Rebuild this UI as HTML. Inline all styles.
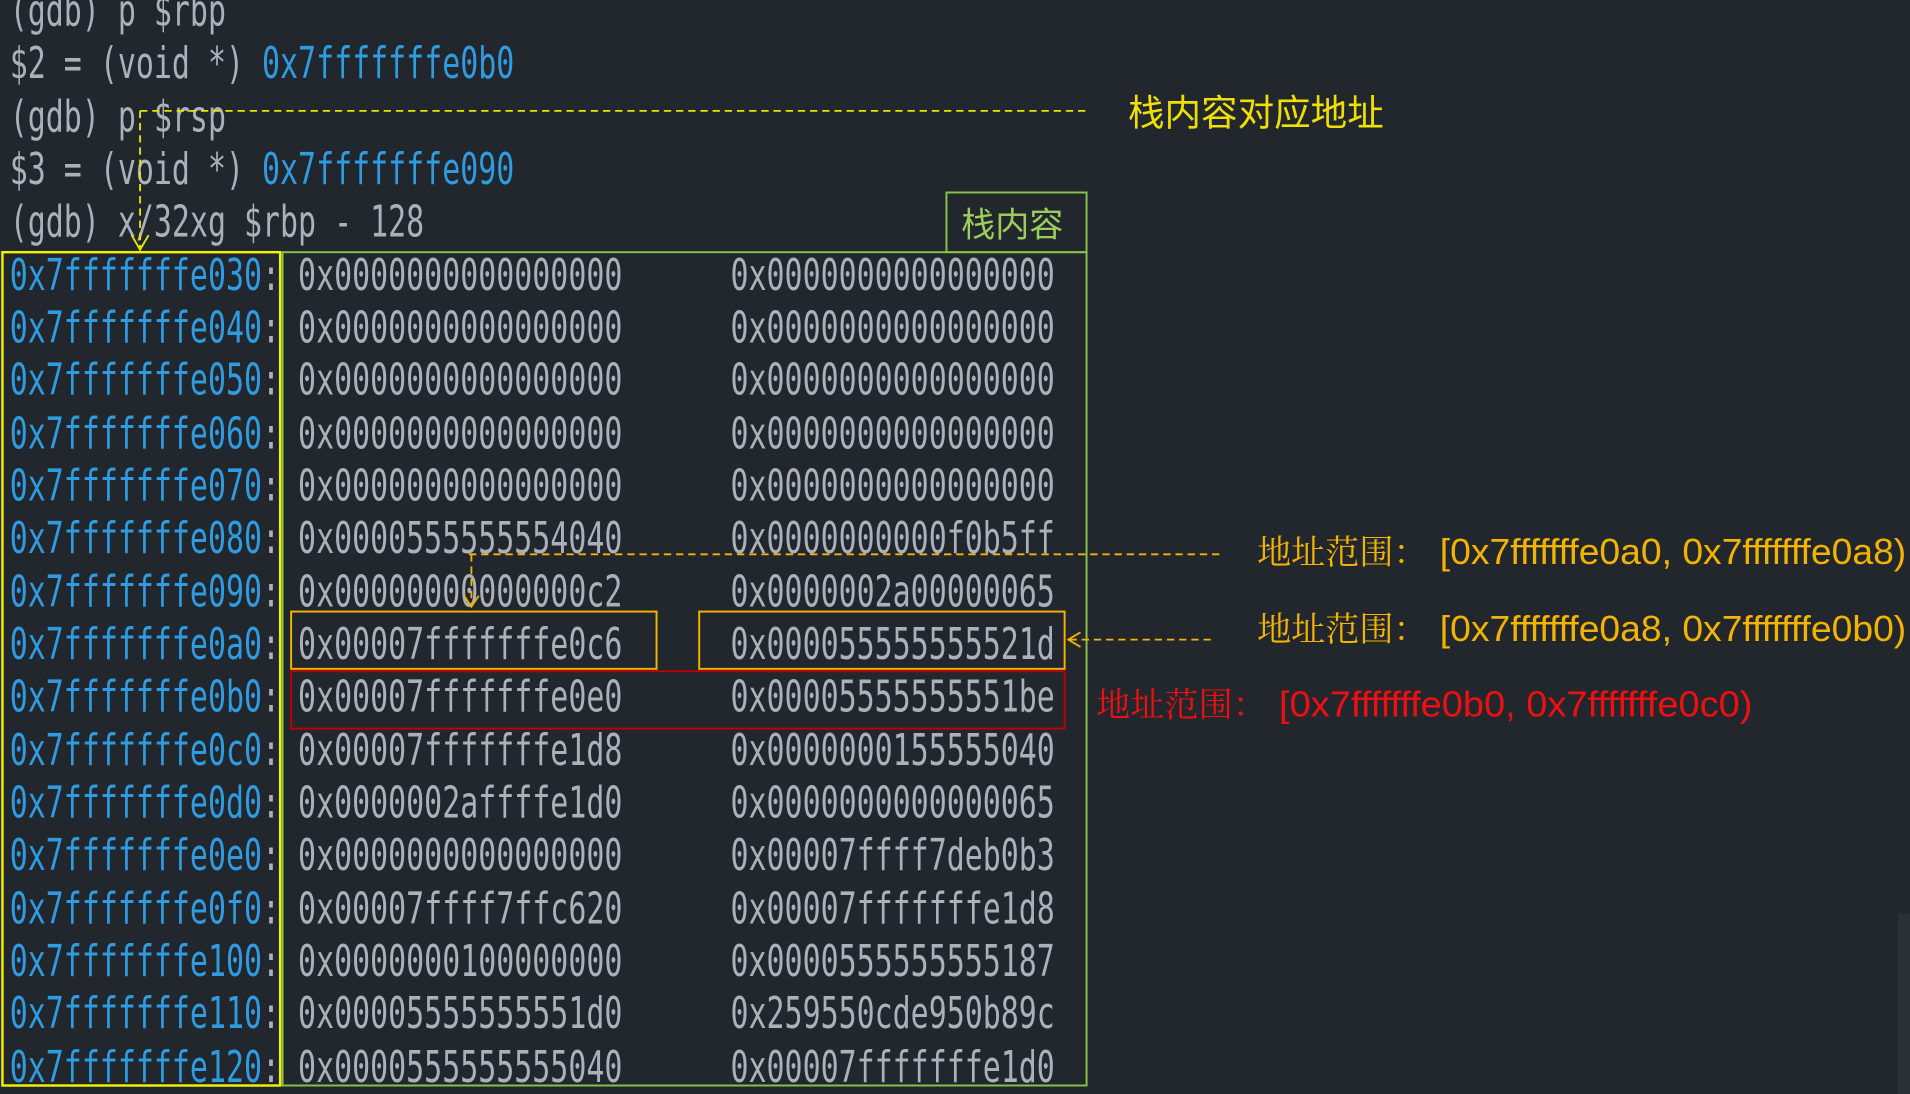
<!DOCTYPE html>
<html><head><meta charset="utf-8"><style>
html,body{margin:0;padding:0;background:#22262d;overflow:hidden;width:1910px;height:1094px}
#w{position:absolute;left:0;top:0;width:1568px;height:898px;transform:scale(1.2181,1.2183);transform-origin:0 0;background:#22262d}
.l{position:absolute;white-space:pre;font-family:"DejaVu Sans Mono","Liberation Mono",monospace;font-size:36px;line-height:43px;height:43px;transform:scaleX(0.6825);transform-origin:0 50%;color:#abb1bb}
.b{color:#2f9be0}
.c{position:absolute;white-space:pre;font-size:28px;line-height:34px;font-family:"Noto Serif CJK SC","Noto Sans CJK SC",serif}
.c span{display:inline-block;margin-left:10px;font-family:"Liberation Sans",sans-serif;font-size:30px;transform:scaleX(1.02);transform-origin:0 50%}
svg{position:absolute;left:0;top:0}
</style></head><body><div id="w">
<div class="l" style="left:8px;top:-12px">(gdb) p $rbp</div>
<div class="l" style="left:8px;top:31px">$2 = (void *) <span class="b">0x7fffffffe0b0</span></div>
<div class="l" style="left:8px;top:75px">(gdb) p $rsp</div>
<div class="l" style="left:8px;top:118px">$3 = (void *) <span class="b">0x7fffffffe090</span></div>
<div class="l" style="left:8px;top:161px">(gdb) x/32xg $rbp - 128</div>
<div class="l" style="left:8px;top:205px"><span class="b">0x7fffffffe030</span>: 0x0000000000000000      0x0000000000000000</div>
<div class="l" style="left:8px;top:248px"><span class="b">0x7fffffffe040</span>: 0x0000000000000000      0x0000000000000000</div>
<div class="l" style="left:8px;top:291px"><span class="b">0x7fffffffe050</span>: 0x0000000000000000      0x0000000000000000</div>
<div class="l" style="left:8px;top:335px"><span class="b">0x7fffffffe060</span>: 0x0000000000000000      0x0000000000000000</div>
<div class="l" style="left:8px;top:378px"><span class="b">0x7fffffffe070</span>: 0x0000000000000000      0x0000000000000000</div>
<div class="l" style="left:8px;top:421px"><span class="b">0x7fffffffe080</span>: 0x0000555555554040      0x0000000000f0b5ff</div>
<div class="l" style="left:8px;top:465px"><span class="b">0x7fffffffe090</span>: 0x00000000000000c2      0x0000002a00000065</div>
<div class="l" style="left:8px;top:508px"><span class="b">0x7fffffffe0a0</span>: 0x00007fffffffe0c6      0x000055555555521d</div>
<div class="l" style="left:8px;top:551px"><span class="b">0x7fffffffe0b0</span>: 0x00007fffffffe0e0      0x00005555555551be</div>
<div class="l" style="left:8px;top:595px"><span class="b">0x7fffffffe0c0</span>: 0x00007fffffffe1d8      0x0000000155555040</div>
<div class="l" style="left:8px;top:638px"><span class="b">0x7fffffffe0d0</span>: 0x0000002affffe1d0      0x0000000000000065</div>
<div class="l" style="left:8px;top:681px"><span class="b">0x7fffffffe0e0</span>: 0x0000000000000000      0x00007ffff7deb0b3</div>
<div class="l" style="left:8px;top:725px"><span class="b">0x7fffffffe0f0</span>: 0x00007ffff7ffc620      0x00007fffffffe1d8</div>
<div class="l" style="left:8px;top:768px"><span class="b">0x7fffffffe100</span>: 0x0000000100000000      0x0000555555555187</div>
<div class="l" style="left:8px;top:811px"><span class="b">0x7fffffffe110</span>: 0x00005555555551d0      0x259550cde950b89c</div>
<div class="l" style="left:8px;top:855px"><span class="b">0x7fffffffe120</span>: 0x0000555555555040      0x00007fffffffe1d0</div>

<svg width="1568" height="898" viewBox="0 0 1568 898">
<rect x="2" y="207" width="228" height="684" fill="none" stroke="#f2f200" stroke-width="2"/>
<rect x="232" y="207" width="660" height="684" fill="none" stroke="#86c34a" stroke-width="1.6"/>
<rect x="777" y="158" width="115" height="49" fill="none" stroke="#86c34a" stroke-width="1.6"/>
<path d="M115 91 H892 M115 91 V204" stroke="#e6e600" stroke-width="1.5" stroke-dasharray="6,4" fill="none"/>
<path d="M108 193 L115 205 L122 193" stroke="#e6e600" stroke-width="1.5" fill="none"/>
<rect x="239" y="502" width="300" height="47" fill="none" stroke="#f2b400" stroke-width="1.6"/>
<rect x="574" y="502" width="300" height="47" fill="none" stroke="#f2b400" stroke-width="1.6"/>
<rect x="239" y="551" width="635" height="47" fill="none" stroke="#c00000" stroke-width="1.6"/>
<path d="M385 455 H1002 M387 455 V498" stroke="#f2b400" stroke-width="1.5" stroke-dasharray="6,4" fill="none"/>
<path d="M381 489 L387 498 L393 489" stroke="#f2b400" stroke-width="1.5" fill="none"/>
<path d="M878 525 H997" stroke="#f2b400" stroke-width="1.5" stroke-dasharray="6,4" fill="none"/>
<path d="M887 519 L877 525 L887 531" stroke="#f2b400" stroke-width="1.5" fill="none"/>
<rect x="1558" y="750" width="10" height="148" fill="#2c3037"/>
</svg>
<div class="c" style="left:789px;top:166px;color:#9acd5a;font-family:'Noto Sans CJK SC',sans-serif;font-size:28px">栈内容</div>
<div class="c" style="left:926px;top:73px;color:#f0e000;font-family:'Noto Sans CJK SC',sans-serif;font-size:30px">栈内容对应地址</div>
<div class="c" style="left:1032px;top:435px;color:#f2b400">地址范围：<span>[0x7fffffffe0a0, 0x7fffffffe0a8)</span></div>
<div class="c" style="left:1032px;top:498px;color:#f2b400">地址范围：<span>[0x7fffffffe0a8, 0x7fffffffe0b0)</span></div>
<div class="c" style="left:900px;top:560px;color:#ee1010">地址范围：<span style="transform:scaleX(1.04)">[0x7fffffffe0b0, 0x7fffffffe0c0)</span></div>
</div></body></html>
